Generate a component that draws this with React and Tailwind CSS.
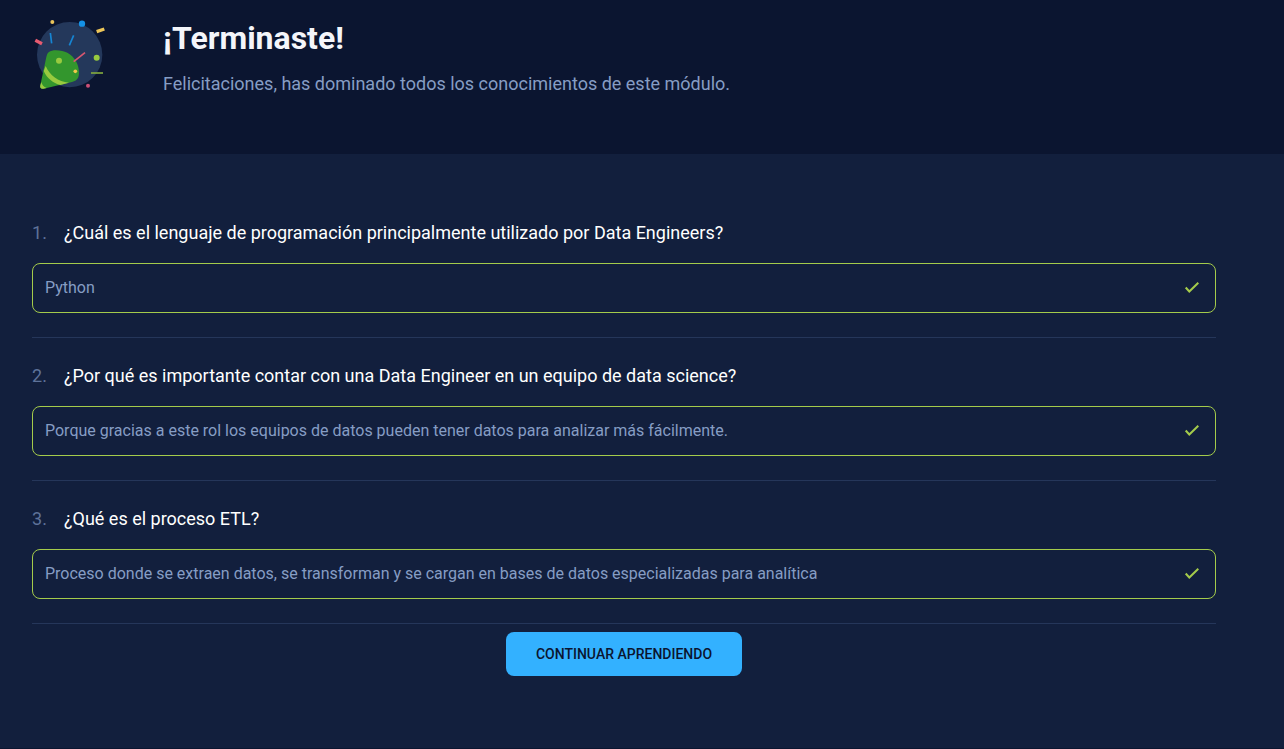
import React from "react";

const questions = [
  {
    question: "¿Cuál es el lenguaje de programación principalmente utilizado por Data Engineers?",
    answer: "Python",
  },
  {
    question: "¿Por qué es importante contar con una Data Engineer en un equipo de data science?",
    answer: "Porque gracias a este rol los equipos de datos pueden tener datos para analizar más fácilmente.",
  },
  {
    question: "¿Qué es el proceso ETL?",
    answer: "Proceso donde se extraen datos, se transforman y se cargan en bases de datos especializadas para analítica",
  },
];

function PartyPopper() {
  return (
    <svg className="size-20 shrink-0" viewBox="21 18 240 240" fill="none" aria-hidden="true">
      <circle cx="134" cy="134" r="98" fill="#24385b" />
      <path d="M72 126C82 117 112 120 127 128C150 141 163 164 162 190C161 209 152 213 141 216L56 236C48 238 44 233 46 226L64 141C66 133 68 129 72 126Z" fill="#33962d" />
      <path d="M62 168C75 197 99 215 132 218L106 225C84 219 67 206 56 183Z" fill="#98ca3f" />
      <path d="M49 216C51 225 56 231 65 234L55 236C48 238 44 233 46 226Z" fill="#98ca3f" />
      <circle cx="102" cy="152" r="9" fill="#98ca3f" />
      <circle cx="151" cy="184" r="5.500" fill="#f0c84c" />
      <circle cx="82" cy="36" r="6" fill="#eac45a" />
      <circle cx="171" cy="41" r="9.500" fill="#1491e6" />
      <circle cx="215" cy="143" r="9" fill="#98ca3f" />
      <circle cx="189" cy="227" r="6" fill="#cb4f76" />
      <path d="M76 69L80 100" stroke="#1685d3" strokeWidth="5" />
      <path d="M146 76L133 106" stroke="#1685d3" strokeWidth="5" />
      <path d="M180 128L146 155" stroke="#d95770" strokeWidth="5" />
      <path d="M198 189H234" stroke="#83a93e" strokeWidth="5" />
      <path d="M31 91L51 101" stroke="#e65b70" strokeWidth="10" />
      <path d="M215 65L238 57" stroke="#edc659" strokeWidth="10" />
    </svg>
  );
}

function CheckIcon() {
  return (
    <svg className="size-4 shrink-0" viewBox="0 0 16 16" fill="none" aria-hidden="true">
      <path d="M1.700 7.500L5.300 11.500L14.300 2.700" stroke="#a4cb4b" strokeWidth="2" />
    </svg>
  );
}

export default function App() {
  return (
    <div className="min-h-screen bg-[#0b1530] font-[Roboto,sans-serif]">
      <header className="flex items-start gap-[51px] px-8 pt-4 pb-14">
        <PartyPopper />
        <div>
          <h1 className="text-[32px] leading-[44px] font-bold text-[#f4f5fa]">¡Terminaste!</h1>
          <p className="mt-2.5 text-lg leading-7 text-[#869dc4]">
            Felicitaciones, has dominado todos los conocimientos de este módulo.
          </p>
        </div>
      </header>
      <main className="bg-[#121f3d] pt-[41px] pr-[68px] pb-[72px] pl-8">
        <ol>
          {questions.map((item, index) => (
            <li key={item.question} className="border-b border-[#25365a] py-6">
              <div className="flex text-lg leading-7">
                <span className="w-8 shrink-0 text-[#5e7299]">{index + 1}.</span>
                <h2 className="text-lg leading-7 font-normal text-white">{item.question}</h2>
              </div>
              <div className="mt-4 flex min-h-[50px] items-center justify-between gap-4 rounded-lg border border-[#a4cb4b] pr-[15px] pl-3 text-base text-[#869dc4]">
                <p>{item.answer}</p>
                <CheckIcon />
              </div>
            </li>
          ))}
        </ol>
        <div className="mt-2 flex justify-center">
          <button
            type="button"
            className="h-11 w-[236px] rounded-lg bg-[#33b1ff] text-sm font-medium text-[#0b1530] uppercase"
          >
            Continuar aprendiendo
          </button>
        </div>
      </main>
    </div>
  );
}
